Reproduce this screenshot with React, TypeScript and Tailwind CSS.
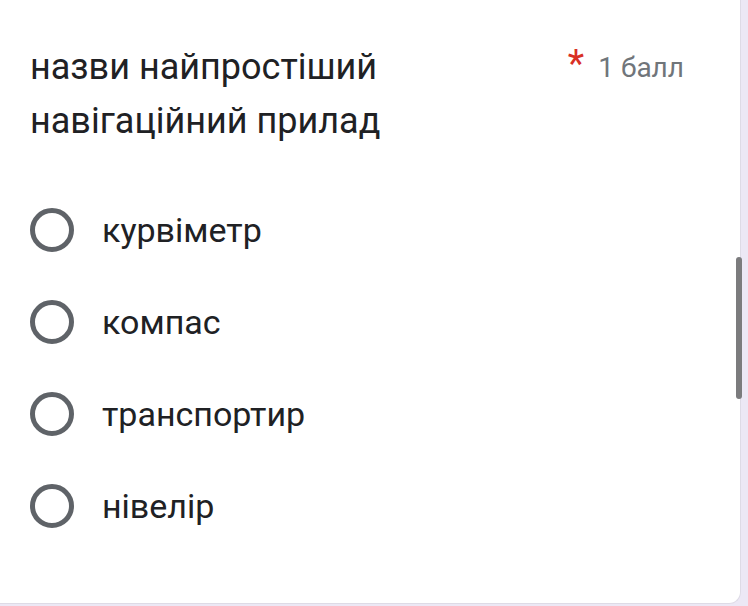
import React from "react";

const options = ["курвіметр", "компас", "транспортир", "нівелір"];

export default function App() {
  return (
    <div className="w-[748px] h-[606px] bg-[#ece8f5] relative overflow-hidden" style={{ fontFamily: "Roboto, 'Noto Sans', sans-serif" }}>
      <div className="w-[741px] h-[604px] bg-white border-r border-b border-[#dedbe6] rounded-br-[12px] pl-[30px] pr-[56px] pt-[40px]">
        <div className="flex items-start justify-between">
          <div className="text-[36px] leading-[54px] text-[#202124] w-[420px]">
            назви найпростіший навігаційний прилад
          </div>
          <div className="flex items-baseline gap-[14px] pt-[4px]">
            <span className="text-[38px] leading-[40px] text-[#d93025]">*</span>
            <span className="text-[28px] leading-[40px] text-[#70757a]">1 балл</span>
          </div>
        </div>
        <div className="mt-[36px] flex flex-col">
          {options.map((o) => (
            <div key={o} className="h-[92px] flex items-center">
              <div className="w-[44px] h-[44px] rounded-full border-[5px] border-[#5f6368] shrink-0" />
              <span className="ml-[28px] text-[34px] text-[#202124]">{o}</span>
            </div>
          ))}
        </div>
      </div>
      <div className="absolute left-[736px] top-[257px] w-[6px] h-[142px] rounded-full bg-[#7b7b7d]" />
    </div>
  );
}
